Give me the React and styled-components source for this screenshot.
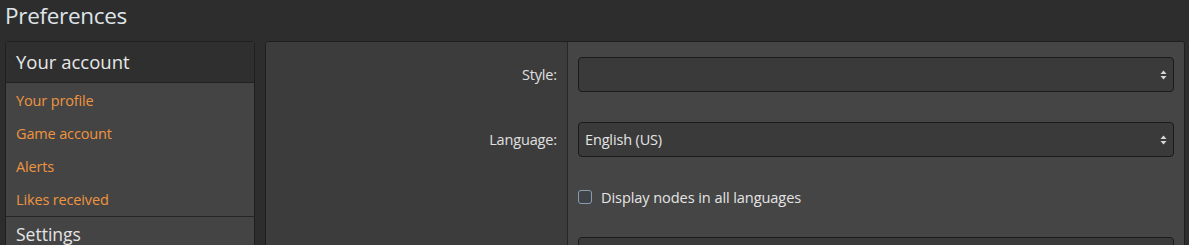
import React from "react";
import styled, { createGlobalStyle } from "styled-components";

const GlobalStyle = createGlobalStyle`
  html, body {
    margin: 0;
    padding: 0;
    background: #2d2d2d;
    font-family: "Open Sans", "Noto Sans", sans-serif;
    overflow: hidden;
  }
`;

const navItems = ["Your profile", "Game account", "Alerts", "Likes received"];

function SelectArrows() {
  return (
    <svg width="7" height="10" viewBox="0 0 7 10">
      <path d="M3.5 0.5 L6.5 4 H0.5 Z" fill="#d8d8d8" />
      <path d="M3.5 9.5 L6.5 6 H0.5 Z" fill="#d8d8d8" />
    </svg>
  );
}

function App() {
  return (
    <Page>
      <GlobalStyle />
      <Title>Preferences</Title>
      <Layout>
        <Sidebar>
          <SideHeader>Your account</SideHeader>
          <NavList>
            {navItems.map((item) => (
              <NavLink key={item}>{item}</NavLink>
            ))}
          </NavList>
          <SideHeader $plain>Settings</SideHeader>
        </Sidebar>
        <Panel>
          <Row>
            <Label>Style:</Label>
            <Control>
              <Select>
                <span></span>
                <SelectArrows />
              </Select>
            </Control>
          </Row>
          <Row>
            <Label>Language:</Label>
            <Control>
              <Select>
                <span>English (US)</span>
                <SelectArrows />
              </Select>
            </Control>
          </Row>
          <Row>
            <Label></Label>
            <Control>
              <Check>
                <Box />
                <span>Display nodes in all languages</span>
              </Check>
            </Control>
          </Row>
          <Row>
            <Label></Label>
            <Control>
              <Select>
                <span></span>
                <SelectArrows />
              </Select>
            </Control>
          </Row>
        </Panel>
      </Layout>
    </Page>
  );
}

export default App;

const Page = styled.div`
  padding: 0 5px;
  height: 245px;
`;

const Title = styled.h1`
  margin: 0;
  height: 41px;
  font-size: 22.5px;
  font-weight: 400;
  color: #dfe4e8;
  line-height: 31px;
  letter-spacing: -0.3px;
`;

const Layout = styled.div`
  display: flex;
  gap: 10px;
  align-items: flex-start;
`;

const Sidebar = styled.div`
  width: 248px;
  border: 1px solid #1f1f1f;
  border-radius: 3px 3px 0 0;
  background: #444444;
`;

const SideHeader = styled.div`
  height: ${(p) => (p.$plain ? "36px" : "40px")};
  padding: 0 10px;
  display: flex;
  align-items: center;
  font-size: ${(p) => (p.$plain ? "17.5px" : "18.5px")};
  color: ${(p) => (p.$plain ? "#e4e4e4" : "#e8e8e8")};
  background: ${(p) => (p.$plain ? "#444444" : "#2f2f2f")};
  border-bottom: ${(p) => (p.$plain ? "none" : "1px solid #222")};
  border-top: ${(p) => (p.$plain ? "1px solid #262626" : "none")};
  line-height: 1;
`;

const NavList = styled.div`
  display: flex;
  flex-direction: column;
  padding: 1px 0 0;
`;

const NavLink = styled.div`
  height: 33px;
  padding: 0 10px;
  display: flex;
  align-items: center;
  font-size: 14.5px;
  color: #ef9440;
  letter-spacing: -0.15px;
`;

const Panel = styled.div`
  flex: 1;
  border: 1px solid #1f1f1f;
  border-radius: 3px 3px 0 0;
  overflow: hidden;
  margin-right: -1px;
`;

const Row = styled.div`
  display: grid;
  grid-template-columns: 302px 1fr;
`;

const Label = styled.div`
  background: #3c3c3c;
  border-right: 1px solid #262626;
  display: flex;
  align-items: center;
  justify-content: flex-end;
  padding-right: 10px;
  font-size: 14.5px;
  color: #e0e0e0;
  letter-spacing: -0.15px;
`;

const Control = styled.div`
  background: #454545;
  padding: 15px 10px;
`;

const Select = styled.div`
  height: 33px;
  border: 1px solid #1b1b1b;
  border-radius: 4px;
  background: #3a3a3a;
  display: flex;
  align-items: center;
  justify-content: space-between;
  padding: 0 6px;
  font-size: 14.5px;
  color: #e4e4e4;
  letter-spacing: -0.15px;
`;

const Check = styled.label`
  display: flex;
  align-items: center;
  gap: 9px;
  height: 20px;
  font-size: 14.6px;
  color: #e4e4e4;
  letter-spacing: -0.1px;
`;

const Box = styled.span`
  flex-shrink: 0;
  box-sizing: border-box;
  width: 14px;
  height: 14px;
  border: 1.5px solid #8a9bb3;
  border-radius: 3px;
  background: #3f4246;
`;
